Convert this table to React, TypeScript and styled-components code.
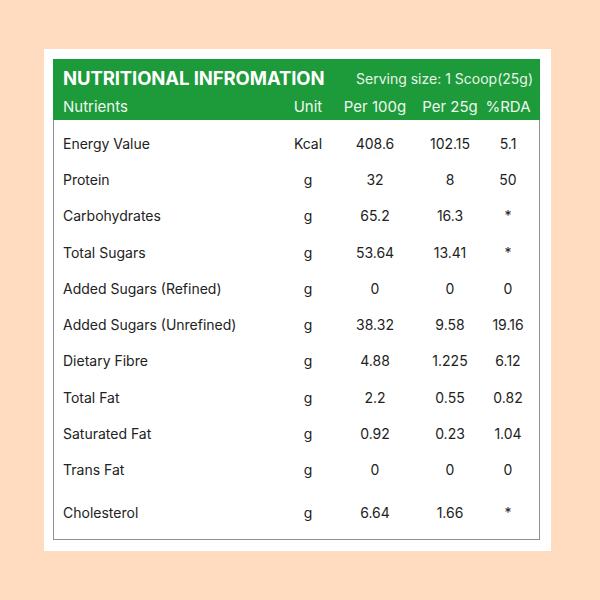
import React from "react";
import styled, { createGlobalStyle } from "styled-components";

const Global = createGlobalStyle`
  html, body { margin: 0; padding: 0; }
  body { background: #ffdcc0; font-family: Inter, "Noto Sans", sans-serif; }
`;

const Page = styled.div`
  width: 600px;
  height: 600px;
  box-sizing: border-box;
  padding: 49px 49px 49px 44px;
  display: flex;
`;

const Card = styled.div`
  flex: 1;
  background: #ffffff;
  padding: 10px 11px 11px 9px;
  display: flex;
`;

const Table = styled.div`
  flex: 1;
  border: 1px solid #8f8f8f;
  border-top: none;
  display: flex;
  flex-direction: column;
  color: #222;
`;

const Head = styled.div`
  background: #1d9a3a;
  color: #fff;
  margin: 0 -1px;
  padding: 8px 7px 0 10px;
  height: 61px;
  box-sizing: border-box;
`;

const TitleRow = styled.div`
  display: flex;
  align-items: center;
  justify-content: space-between;
  height: 22px;
`;

const Title = styled.div`
  font-weight: 700;
  font-size: 18.5px;
  letter-spacing: -0.1px;
`;

const Serving = styled.div`
  font-size: 14px;
  font-weight: 400;
  color: #e8f6ea;
`;

const Grid = styled.div<{ $h: number }>`
  display: grid;
  grid-template-columns: 220px 50px 84px 66px 50px;
  align-items: center;
  height: ${(p) => p.$h}px;
`;

const HeadGrid = styled(Grid)`
  margin-top: 7px;
  font-size: 15px;
  color: #eef8ef;
`;

const Body = styled.div`
  display: flex;
  flex-direction: column;
  padding: 5px 0 0 9px;
`;

const Row = styled(Grid)<{ $gap?: number }>`
  font-size: 14px;
  margin-top: ${(p) => p.$gap ?? 0}px;
`;

const Name = styled.div`
  text-align: left;
`;

const Cell = styled.div`
  text-align: center;
`;

const rows: [string, string, string, string, string][] = [
  ["Energy Value", "Kcal", "408.6", "102.15", "5.1"],
  ["Protein", "g", "32", "8", "50"],
  ["Carbohydrates", "g", "65.2", "16.3", "*"],
  ["Total Sugars", "g", "53.64", "13.41", "*"],
  ["Added Sugars (Refined)", "g", "0", "0", "0"],
  ["Added Sugars (Unrefined)", "g", "38.32", "9.58", "19.16"],
  ["Dietary Fibre", "g", "4.88", "1.225", "6.12"],
  ["Total Fat", "g", "2.2", "0.55", "0.82"],
  ["Saturated Fat", "g", "0.92", "0.23", "1.04"],
  ["Trans Fat", "g", "0", "0", "0"],
  ["Cholesterol", "g", "6.64", "1.66", "*"],
];

export default function App() {
  return (
    <>
      <Global />
      <Page>
        <Card>
          <Table>
            <Head>
              <TitleRow>
                <Title>NUTRITIONAL INFROMATION</Title>
                <Serving>Serving size: 1 Scoop(25g)</Serving>
              </TitleRow>
              <HeadGrid $h={20}>
                <Name>Nutrients</Name>
                <Cell>Unit</Cell>
                <Cell>Per 100g</Cell>
                <Cell>Per 25g</Cell>
                <Cell>%RDA</Cell>
              </HeadGrid>
            </Head>
            <Body>
              {rows.map((r, i) => (
                <Row key={r[0]} $h={36.3} $gap={i === rows.length - 1 ? 6 : 0}>
                  <Name>{r[0]}</Name>
                  <Cell>{r[1]}</Cell>
                  <Cell>{r[2]}</Cell>
                  <Cell>{r[3]}</Cell>
                  <Cell>{r[4]}</Cell>
                </Row>
              ))}
            </Body>
          </Table>
        </Card>
      </Page>
    </>
  );
}
